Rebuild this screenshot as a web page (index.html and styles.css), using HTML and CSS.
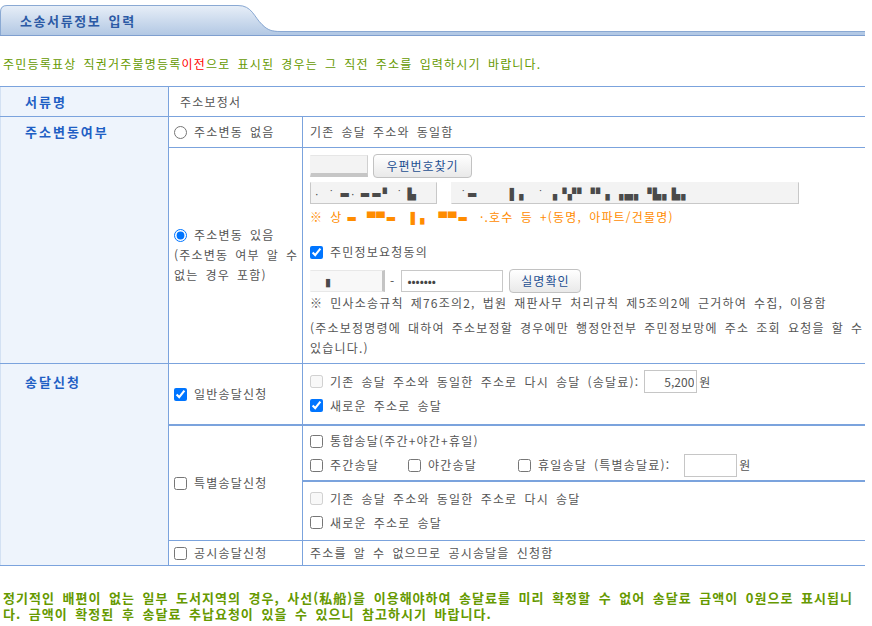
FILE: index.html
```
<!DOCTYPE html>
<html lang="ko">
<head>
  <meta charset="UTF-8">
  <title>소송서류정보 입력</title>
  <link rel="stylesheet" href="styles.css">
</head>
<body>
<div class="wrap">
  <div class="tab">
    <div class="tab-label">소송서류정보 입력</div>
    <div class="tab-line"></div>
  </div>

  <p class="notice">주민등록표상 직권거주불명등록<span class="red">이전</span>으로 표시된 경우는 그 직전 주소를 입력하시기 바랍니다.</p>

  <table class="form">
    <colgroup>
      <col class="c-label">
      <col class="c-opt">
      <col>
    </colgroup>
    <tr class="h-name">
      <th>서류명</th>
      <td colspan="2" class="doc">주소보정서</td>
    </tr>
    <tr class="h-same">
      <th rowspan="2">주소변동여부</th>
      <td class="opt"><label><input type="radio" name="chg">주소변동 없음</label></td>
      <td class="val">기존 송달 주소와 동일함</td>
    </tr>
    <tr>
      <td class="opt">
        <label><input type="radio" name="chg" checked>주소변동 있음</label>
        <div class="sub">(주소변동 여부 알 수 없는 경우 포함)</div>
      </td>
      <td class="val addr">
        <div class="zip-row">
          <span class="box zip"></span>
          <button class="btn btn-zip">우편번호찾기</button>
        </div>
        <div class="addr-row">
          <span class="box addr1"><span class="mask">·&nbsp; ˙ ▬· ▬▬▘ ˙ ▙</span></span>
          <span class="box addr2"><span class="mask">&nbsp;˙▬&nbsp;&nbsp;&nbsp;&nbsp;&nbsp;&nbsp; ▌▖&nbsp; ˙ ▗▝▞▘▝▘▖▗▄▖▝▙▖▙▖</span></span>
        </div>
        <div class="warn">※ 상<span class="mask-o">▬&nbsp; ▀▀▬&nbsp;&nbsp; ▌▖&nbsp; ▀▀▬</span> ·.호수 등 +(동명, 아파트/건물명)</div>
        <div class="agree"><label><input type="checkbox" checked>주민정보요청동의</label></div>
        <div class="id-row">
          <span class="box id1"><span class="mask">▮</span></span>
          <span class="dash">-</span>
          <span class="box id2">•••••••</span>
          <button class="btn btn-id">실명확인</button>
        </div>
        <p class="law">※ 민사소송규칙 제76조의2, 법원 재판사무 처리규칙 제5조의2에 근거하여 수집, 이용함</p>
        <p class="law">(주소보정명령에 대하여 주소보정할 경우에만 행정안전부 주민정보망에 주소 조회 요청을 할 수 있습니다.)</p>
      </td>
    </tr>
    <tr class="h-normal">
      <th rowspan="4" class="th-send">송달신청</th>
      <td class="opt"><label><input type="checkbox" checked>일반송달신청</label></td>
      <td class="val">
        <div class="line"><label><input type="checkbox" disabled>기존 송달 주소와 동일한 주소로 다시 송달 (송달료):</label><input type="text" class="fee" value="5,200" readonly>원</div>
        <div class="line"><label><input type="checkbox" checked>새로운 주소로 송달</label></div>
      </td>
    </tr>
    <tr class="h-special thick">
      <td rowspan="2" class="opt"><label><input type="checkbox">특별송달신청</label></td>
      <td class="val">
        <div class="line"><label><input type="checkbox">통합송달(주간+야간+휴일)</label></div>
        <div class="line">
          <label class="w-day"><input type="checkbox">주간송달</label>
          <label class="w-night"><input type="checkbox">야간송달</label>
          <label><input type="checkbox">휴일송달 (특별송달료):</label><input type="text" class="fee fee-sp" readonly>원
        </div>
      </td>
    </tr>
    <tr class="h-special2 thick">
      <td class="val">
        <div class="line"><label><input type="checkbox" disabled>기존 송달 주소와 동일한 주소로 다시 송달</label></div>
        <div class="line"><label><input type="checkbox">새로운 주소로 송달</label></div>
      </td>
    </tr>
    <tr class="h-public">
      <td class="opt"><label><input type="checkbox">공시송달신청</label></td>
      <td class="val">주소를 알 수 없으므로 공시송달을 신청함</td>
    </tr>
  </table>

  <p class="bottom-note">정기적인 배편이 없는 일부 도서지역의 경우, 사선(私船)을 이용해야하여 송달료를 미리 확정할 수 없어 송달료 금액이 0원으로 표시됩니다. 금액이 확정된 후 송달료 추납요청이 있을 수 있으니 참고하시기 바랍니다.</p>
</div>
</body>
</html>
```

FILE: styles.css
```
* { box-sizing: border-box; }
body {
  margin: 0;
  font-family: "Noto Sans CJK KR", sans-serif;
  font-size: 12px;
  color: #555;
  letter-spacing: 1.2px;
  word-spacing: 2.5px;
  background: #fff;
}
.wrap { width: 865px; }

/* tab header */
.tab { display: flex; align-items: flex-end; height: 31px; margin-top: 5px; }
.tab-label {
  width: 280px;
  height: 31px;
  padding-left: 20px;
  line-height: 31px;
  font-size: 13px;
  font-weight: bold;
  color: #2c5aa5;
  letter-spacing: 1.6px;
  word-spacing: 2px;
  background: url("data:image/svg+xml;utf8,<svg xmlns='http://www.w3.org/2000/svg' width='280' height='31'><defs><linearGradient id='g' x1='0' y1='0' x2='0' y2='1'><stop offset='0' stop-color='%23e8eff8'/><stop offset='1' stop-color='%23b1c7e3'/></linearGradient></defs><path d='M0 31V7Q0 0 7 0H238C252 0 254 12 262 19C268 25 272 26 280 26V31Z' fill='url(%23g)'/><path d='M0.5 31V7Q0.5 0.5 7 0.5H238C252 0.5 254 12 262 19.5C268 25.5 272 26.5 280 26.5' fill='none' stroke='%238aa9d3'/><path d='M0 30.5H280' stroke='%237f9fcf'/></svg>") no-repeat;
}
.tab-line {
  flex: 1;
  height: 5px;
  background: #b3c9e5;
  border-top: 1px solid #8aa9d3;
  border-bottom: 1px solid #7f9fcf;
}

.notice { margin: 18px 0 0 3px; line-height: 20px; color: #669900; }
.red { color: #ff0000; }

/* form table */
.form { width: 865px; border-collapse: collapse; margin-top: 12px; }
.c-label { width: 168px; }
.c-opt { width: 134px; }
.form th, .form td {
  border: 1px solid #7ba3dd;
  padding: 0;
  text-align: left;
  font-weight: normal;
  line-height: 20px;
}
.form td:last-child { border-right: 0; }
.form th {
  background: #eef4fc;
  border-left-color: #d3e1f3;
  color: #1f5fc4;
  font-size: 13px;
  font-weight: bold;
  letter-spacing: 2px;
  vertical-align: top;
  padding: 5px 0 0 24px;
}
.form th.th-send { padding-top: 8px; }
.form tr.thick td { border-top-width: 2px; }

.h-name { height: 30px; }
.h-same { height: 31px; }
.h-normal { height: 62px; }
.h-special { height: 56px; }
.h-special2 { height: 59px; }
.h-public { height: 25px; }

.doc { padding-left: 11px !important; vertical-align: middle; }
.opt { padding: 0 0 0 5px !important; vertical-align: middle; }
.val { padding: 0 0 0 7px !important; vertical-align: middle; }

input[type=checkbox], input[type=radio] {
  margin: 0 7px 0 0;
  vertical-align: -2px;
}
.sub { line-height: 20px; }

.line { display: flex; align-items: center; height: 24px; }
.line label { display: inline-flex; align-items: center; }
.w-day { width: 98px; }
.w-night { width: 110px; }
.fee {
  width: 53px;
  height: 23px;
  margin: 0 2px 0 5px;
  border: 1px solid #c6c6c6;
  padding: 0 2px;
  text-align: right;
  font: inherit;
  color: #555;
  letter-spacing: 0;
}
.fee-sp { margin-left: 14px; }

/* address cell */
.addr { vertical-align: top !important; padding-top: 5px !important; padding-bottom: 5px !important; }
.zip-row, .addr-row, .id-row { display: flex; align-items: center; }
.zip-row { height: 25px; }
.addr-row { height: 26px; margin-top: 2px; }
.id-row { height: 24px; }
.box {
  display: inline-block;
  height: 22px;
  background: #f3f3f3;
  border: 1px solid #d2d2d2;
  color: #444;
  line-height: 20px;
  overflow: hidden;
  white-space: nowrap;
}
.zip { width: 58px; border-color: #e6e6e6 #d0d0d0 #c6c6c6 #f3f3f3; border-bottom-width: 4px; }
.addr1 { width: 127px; border-color: #f3f3f3 #c8c8c8 #c8c8c8 #c8c8c8; }
.addr2 { width: 348px; margin-left: 14px; border-color: #f3f3f3 #c8c8c8 #c8c8c8 #f3f3f3; }
.mask { font-family: "DejaVu Sans", sans-serif; font-size: 11px; color: #4a4a4a; letter-spacing: 1px; word-spacing: 0; padding-left: 4px; }
.mask-o { font-family: "DejaVu Sans", sans-serif; font-size: 11px; letter-spacing: 1px; word-spacing: 0; padding: 0 4px; }
.warn { color: #ff8c00; line-height: 20px; margin-top: 1px; }
.agree { margin-top: 13px; line-height: 20px; }
.agree label { display: inline-flex; align-items: center; }
.id-row { margin-top: 5px; }
.id1 { width: 75px; background: #f8f8f8; border-color: #e8e8e8 #c4c4c4 #e8e8e8 #f8f8f8; border-right-width: 3px; padding-left: 10px; }
.dash { margin: 0 6px 0 5px; }
.id2 { width: 102px; background: #fff; border-color: #c8c8c8; padding-left: 5px; letter-spacing: 0; }
.law { margin: 0; line-height: 20px; }
.law + .law { margin-top: 5px; }

.btn {
  height: 24px;
  padding: 0;
  border: 1px solid #c2c2c2;
  border-radius: 4px;
  background: linear-gradient(#ffffff, #e9e9e9);
  color: #1d4f91;
  font: inherit;
  letter-spacing: 1px;
}
.btn-zip { width: 99px; margin-left: 5px; }
.btn-id { width: 72px; margin-left: 6px; }

.bottom-note {
  margin: 24px 0 0 3px;
  color: #669900;
  font-size: 13px;
  font-weight: bold;
  line-height: 16px;
  letter-spacing: 1px;
  word-spacing: 3px;
}
```
